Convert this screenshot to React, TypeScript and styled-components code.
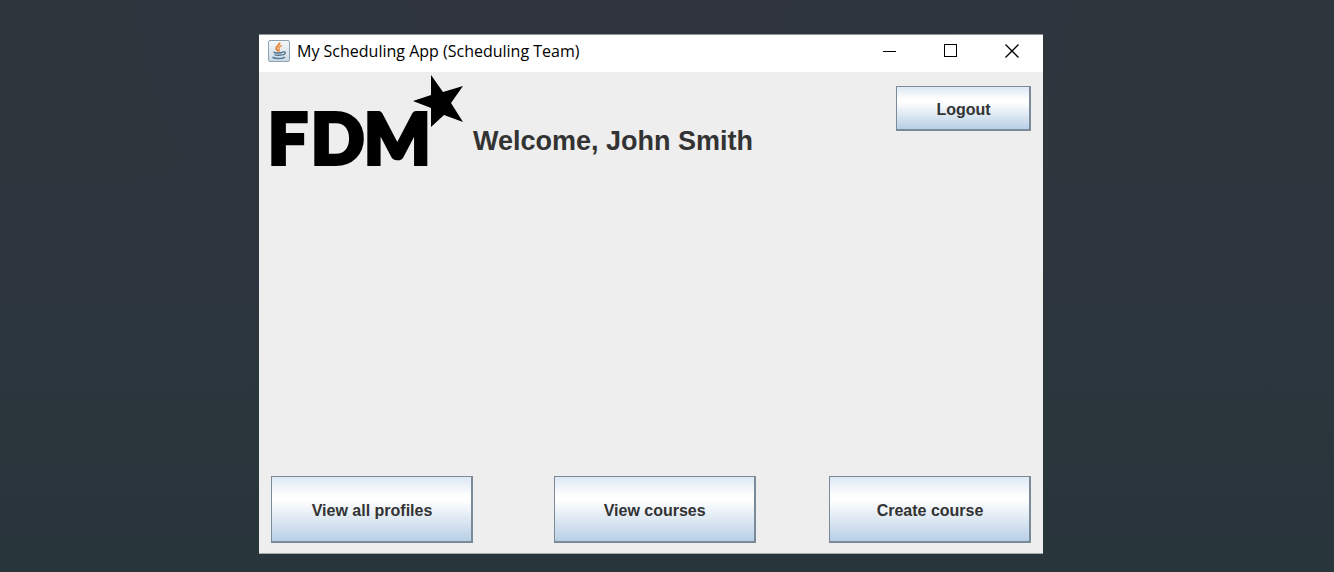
import React from 'react';
import styled, { createGlobalStyle } from 'styled-components';

const GlobalStyle = createGlobalStyle`
  * { box-sizing: border-box; }
  body { margin: 0; font-family: "Liberation Sans", Arial, sans-serif; }
`;

const Desktop = styled.div`
  display: flex;
  min-height: 100vh;
  padding: 34px 291px 18px 259px;
  background:
    radial-gradient(ellipse at 45% 0%, rgba(48, 50, 64, 0.4), rgba(48, 50, 64, 0) 50%),
    linear-gradient(180deg, #2f363e 0%, #2d363e 50%, #28353b 100%);
`;

const AppWindow = styled.main`
  flex: 1;
  display: flex;
  flex-direction: column;
  background: #eeeeee;
  border-top: 1px solid #8f949a;
  border-bottom: 1px solid #a4a9aa;
`;

const TitleBar = styled.header`
  display: flex;
  align-items: stretch;
  height: 37px;
  padding: 0 1px 0 9px;
  background: #ffffff;
`;

const Caption = styled.div`
  flex: 1;
  display: flex;
  align-items: center;
  gap: 7px;
  padding-bottom: 5px;
`;

const Title = styled.h1`
  margin: 0;
  color: #000000;
  font: 400 16px/24px "Open Sans", "Segoe UI", sans-serif;
  white-space: nowrap;
`;

const WindowControl = styled.button`
  display: flex;
  align-items: center;
  justify-content: center;
  width: 61px;
  padding: 0 0 5px;
  border: 0;
  background: none;
`;

const Content = styled.div`
  flex: 1;
  display: flex;
  flex-direction: column;
  justify-content: space-between;
  padding: 3px 12px 10px;
`;

const Banner = styled.section`
  display: flex;
  align-items: flex-end;
  gap: 10px;
`;

const Logo = styled.svg`
  flex: none;
  overflow: visible;
`;

const Welcome = styled.h2`
  flex: 1;
  margin: 0;
  padding-bottom: 9px;
  color: #333333;
  font-size: 27px;
  line-height: 32px;
`;

const MetalButton = styled.button<{ $compact?: boolean }>`
  width: ${({ $compact }) => ($compact ? 135 : 202)}px;
  height: ${({ $compact }) => ($compact ? 45 : 67)}px;
  padding: 4px 0 0 1px;
  border: solid #7a8a99;
  border-width: 1px 2px 2px 1px;
  background: linear-gradient(180deg, #dde8f3 0%, #ffffff 30%, #ffffff 36%, #b8cfe5 100%);
  color: #333333;
  font: 700 16px/20px "Liberation Sans", Arial, sans-serif;
`;

const LogoutSlot = styled.div`
  align-self: flex-start;
  padding-top: 11px;
`;

const Actions = styled.nav`
  display: grid;
  grid-template-columns: auto 11fr auto 10fr auto;

  & > :nth-child(2) { grid-column: 3; }
  & > :nth-child(3) { grid-column: 5; }
`;

const JavaIcon = () => (
  <svg width="22" height="22" viewBox="0 0 22 22" aria-hidden="true">
    <defs>
      <linearGradient id="tile" x1="0" y1="0" x2="0" y2="1">
        <stop offset="0" stopColor="#f6f8fa" />
        <stop offset="1" stopColor="#cbd9e4" />
      </linearGradient>
    </defs>
    <rect x="0.5" y="0.5" width="21" height="21" rx="1.5" fill="url(#tile)" stroke="#8da2b2" />
    <path d="M11.500 2.500c.8 2.500-3.500 3.500-3.300 5.800.1 1.300 1.700 1.900 2 3.200" fill="none" stroke="#e58435" strokeWidth="2" />
    <path d="M13.800 5.500c-2.200.9-3.400 1.800-2.900 3.100.4.900 1 1.500.1 2.900" fill="none" stroke="#eb9650" strokeWidth="1.600" />
    <path d="M5.500 12.200c1.800 1.200 7.500 1.200 9.500 0M6.500 14.600c1.700.9 6 .9 7.600 0" fill="none" stroke="#55748d" strokeWidth="1.500" />
    <path d="M4.500 17.300c2.500 1.600 10 1.600 12.500-.2" fill="none" stroke="#55809f" strokeWidth="1.700" />
    <path d="M14.800 12c3.400-1 3.400 2.200-.4 3.200" fill="none" stroke="#55748d" strokeWidth="1.300" />
  </svg>
);

const FdmLogo = () => (
  <Logo width="192" height="91" viewBox="0 0 192 91" role="img" aria-label="FDM">
    <text
      x="-3 40 93"
      y="89"
      fontFamily="Lato, sans-serif"
      fontWeight="900"
      fontSize="70"
      fill="#000000"
      stroke="#000000"
      strokeWidth="4"
      strokeLinejoin="miter"
    >
      FDM
    </text>
    <path d="M160 0 172 17 192 11 180 28 192 47 173 40 160 52V33L142 26 160 20Z" fill="#000000" />
  </Logo>
);

const actions = ['View all profiles', 'View courses', 'Create course'];

export default function App() {
  return (
    <>
      <GlobalStyle />
      <Desktop>
        <AppWindow>
          <TitleBar>
            <Caption>
              <JavaIcon />
              <Title>My Scheduling App (Scheduling Team)</Title>
            </Caption>
            <WindowControl aria-label="Minimize">
              <svg width="14" height="14" shapeRendering="crispEdges">
                <path d="M0 7.500h13" stroke="#000" />
              </svg>
            </WindowControl>
            <WindowControl aria-label="Maximize">
              <svg width="14" height="14" shapeRendering="crispEdges">
                <path d="M.5.5h12v12H.5Z" fill="none" stroke="#000" />
              </svg>
            </WindowControl>
            <WindowControl aria-label="Close">
              <svg width="14" height="14">
                <path d="M.5.5l13 13M13.500.5l-13 13" stroke="#000" strokeWidth="1.300" />
              </svg>
            </WindowControl>
          </TitleBar>
          <Content>
            <Banner>
              <FdmLogo />
              <Welcome>Welcome, John Smith</Welcome>
              <LogoutSlot>
                <MetalButton $compact>Logout</MetalButton>
              </LogoutSlot>
            </Banner>
            <Actions aria-label="Scheduling actions">
              {actions.map((label) => (
                <MetalButton key={label}>{label}</MetalButton>
              ))}
            </Actions>
          </Content>
        </AppWindow>
      </Desktop>
    </>
  );
}
